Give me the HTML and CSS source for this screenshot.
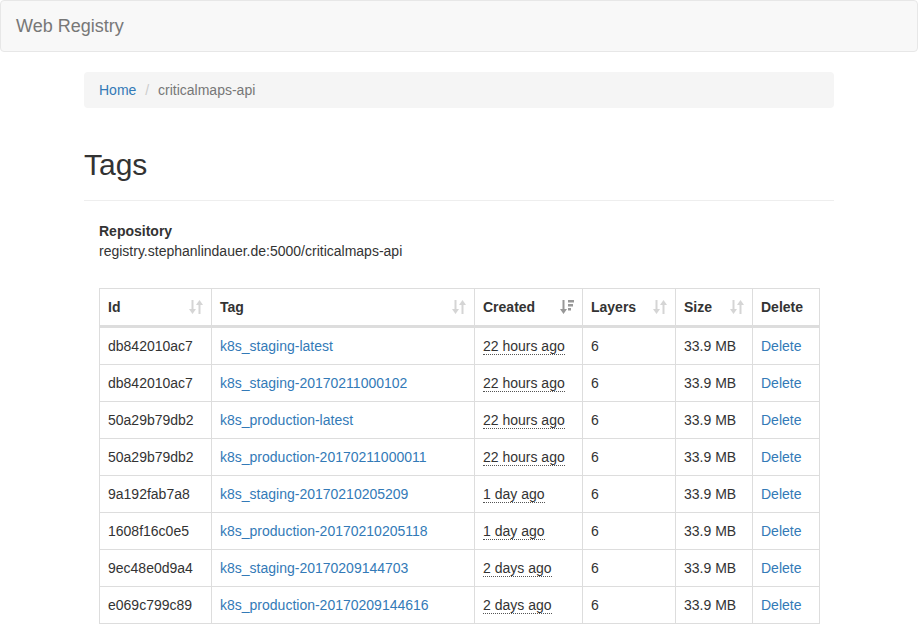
FILE: index.html
```html
<!DOCTYPE html>
<html lang="en">
<head>
<meta charset="utf-8">
<title>Web Registry</title>
<link rel="stylesheet" href="styles.css">
</head>
<body>
<nav class="navbar">
  <a class="brand" href="#">Web Registry</a>
</nav>
<div class="container">
  <ol class="breadcrumb">
    <li><a href="#">Home</a></li>
    <li class="active">criticalmaps-api</li>
  </ol>
  <div class="page-header">
    <h1>Tags</h1>
  </div>
  <div class="content">
    <dl class="repo">
      <dt>Repository</dt>
      <dd>registry.stephanlindauer.de:5000/criticalmaps-api</dd>
    </dl>
    <table class="tags">
      <colgroup>
        <col class="c-id"><col class="c-tag"><col class="c-created"><col class="c-layers"><col class="c-size"><col class="c-delete">
      </colgroup>
      <thead>
        <tr>
          <th><div class="th-inner"><span>Id</span><svg class="sort" viewBox="0 0 14 14"><path d="M2.5 0h2v9H7L3.5 14 0 9h2.5z"/><path d="M10.5 0L14 5h-2.5v9h-2V5H7z"/></svg></div></th>
          <th><div class="th-inner"><span>Tag</span><svg class="sort" viewBox="0 0 14 14"><path d="M2.5 0h2v9H7L3.5 14 0 9h2.5z"/><path d="M10.5 0L14 5h-2.5v9h-2V5H7z"/></svg></div></th>
          <th><div class="th-inner"><span>Created</span><svg class="sort sorted" viewBox="0 0 14 14"><path d="M2.5 0h2v9H7L3.5 14 0 9h2.5z"/><path d="M8 0h6v2.5H8zM8 4h5v2.5H8zM8 8h3v2.5H8z"/></svg></div></th>
          <th><div class="th-inner"><span>Layers</span><svg class="sort" viewBox="0 0 14 14"><path d="M2.5 0h2v9H7L3.5 14 0 9h2.5z"/><path d="M10.5 0L14 5h-2.5v9h-2V5H7z"/></svg></div></th>
          <th><div class="th-inner"><span>Size</span><svg class="sort" viewBox="0 0 14 14"><path d="M2.5 0h2v9H7L3.5 14 0 9h2.5z"/><path d="M10.5 0L14 5h-2.5v9h-2V5H7z"/></svg></div></th>
          <th><div class="th-inner"><span>Delete</span></div></th>
        </tr>
      </thead>
      <tbody>
        <tr><td>db842010ac7</td><td><a href="#">k8s_staging-latest</a></td><td><abbr title="2017-02-11">22 hours ago</abbr></td><td>6</td><td>33.9 MB</td><td><a href="#">Delete</a></td></tr>
        <tr><td>db842010ac7</td><td><a href="#">k8s_staging-20170211000102</a></td><td><abbr title="2017-02-11">22 hours ago</abbr></td><td>6</td><td>33.9 MB</td><td><a href="#">Delete</a></td></tr>
        <tr><td>50a29b79db2</td><td><a href="#">k8s_production-latest</a></td><td><abbr title="2017-02-11">22 hours ago</abbr></td><td>6</td><td>33.9 MB</td><td><a href="#">Delete</a></td></tr>
        <tr><td>50a29b79db2</td><td><a href="#">k8s_production-20170211000011</a></td><td><abbr title="2017-02-11">22 hours ago</abbr></td><td>6</td><td>33.9 MB</td><td><a href="#">Delete</a></td></tr>
        <tr><td>9a192fab7a8</td><td><a href="#">k8s_staging-20170210205209</a></td><td><abbr title="2017-02-10">1 day ago</abbr></td><td>6</td><td>33.9 MB</td><td><a href="#">Delete</a></td></tr>
        <tr><td>1608f16c0e5</td><td><a href="#">k8s_production-20170210205118</a></td><td><abbr title="2017-02-10">1 day ago</abbr></td><td>6</td><td>33.9 MB</td><td><a href="#">Delete</a></td></tr>
        <tr><td>9ec48e0d9a4</td><td><a href="#">k8s_staging-20170209144703</a></td><td><abbr title="2017-02-09">2 days ago</abbr></td><td>6</td><td>33.9 MB</td><td><a href="#">Delete</a></td></tr>
        <tr><td>e069c799c89</td><td><a href="#">k8s_production-20170209144616</a></td><td><abbr title="2017-02-09">2 days ago</abbr></td><td>6</td><td>33.9 MB</td><td><a href="#">Delete</a></td></tr>
      </tbody>
    </table>
  </div>
</div>
</body>
</html>
```

FILE: styles.css
```css
html, body {
  margin: 0;
  padding: 0;
  background: #fff;
}
body {
  font-family: "Liberation Sans", Arial, Helvetica, sans-serif;
  font-size: 14px;
  line-height: 20px;
  color: #333;
}
a {
  color: #337ab7;
  text-decoration: none;
}
.navbar {
  height: 50px;
  margin: 0 0 20px;
  padding: 0 15px;
  background: #f8f8f8;
  border: 1px solid #e7e7e7;
  border-radius: 4px;
}
.brand {
  display: inline-block;
  padding: 15px 0;
  font-size: 18px;
  line-height: 20px;
  color: #777;
}
.container {
  width: 750px;
  margin: 0 auto;
}
.breadcrumb {
  list-style: none;
  margin: 0;
  padding: 8px 15px;
  background: #f5f5f5;
  border-radius: 4px;
}
.breadcrumb li {
  display: inline-block;
}
.breadcrumb li + li::before {
  content: "/\00a0";
  padding: 0 5px;
  color: #ccc;
}
.breadcrumb .active {
  color: #777;
}
.page-header {
  margin: 40px 0 20px;
  padding-bottom: 9px;
  border-bottom: 1px solid #eee;
}
.page-header h1 {
  margin: 0 0 10px;
  font-size: 30px;
  font-weight: 500;
  line-height: 1.1;
}
.content {
  padding: 0 15px;
}
.repo {
  margin: 0 0 27px;
}
.repo dt {
  font-weight: bold;
}
.repo dd {
  margin: 0;
}
.tags {
  width: 720px;
  table-layout: fixed;
  border-collapse: collapse;
  border: 1px solid #ddd;
}
.c-id { width: 112px; }
.c-tag { width: 263px; }
.c-created { width: 108px; }
.c-layers { width: 93px; }
.c-size { width: 77px; }
.c-delete { width: 67px; }
.tags th,
.tags td {
  padding: 8px;
  border: 1px solid #ddd;
  text-align: left;
  vertical-align: top;
  white-space: nowrap;
}
.tags thead th {
  border-bottom-width: 3px;
  font-weight: bold;
}
.th-inner {
  display: flex;
  align-items: center;
  justify-content: space-between;
}
.sort {
  width: 14px;
  height: 14px;
  fill: #333;
  opacity: 0.2;
  flex: none;
}
.sort.sorted {
  opacity: 0.5;
}
abbr[title] {
  text-decoration: none;
  border-bottom: 1px dotted #555;
  cursor: help;
}
```
